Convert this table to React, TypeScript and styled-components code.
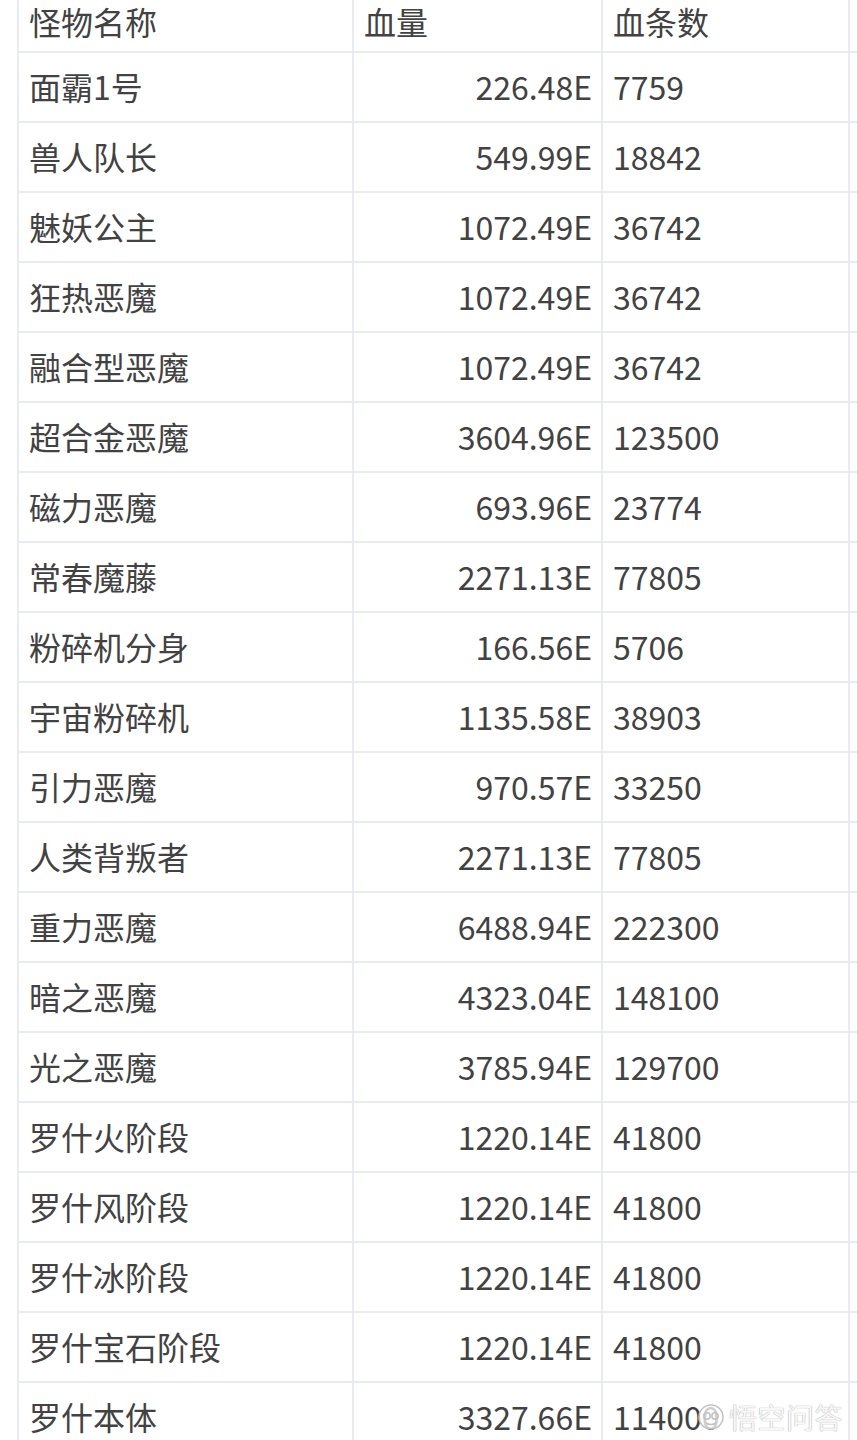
import React from 'react';
import styled, { createGlobalStyle } from 'styled-components';

const GlobalStyle = createGlobalStyle`
  html, body {
    margin: 0;
    padding: 0;
    background: #ffffff;
    overflow: hidden;
  }
  body {
    font-family: "Noto Sans CJK SC", "Noto Sans", sans-serif;
  }
`;

const Page = styled.div`
  position: relative;
  width: 857px;
  height: 1440px;
  overflow: hidden;
  background: #fff;
`;

const Sheet = styled.div`
  padding-left: 17px;
  display: grid;
  grid-template-columns: 337px 249px 247px 1fr;
  grid-template-rows: 53px;
  grid-auto-rows: 70px;
`;

interface CellProps {
  align?: 'left' | 'right'
  first?: boolean
  head?: boolean
}

const Cell = styled.div<CellProps>`
  box-sizing: border-box;
  display: flex;
  align-items: center;
  justify-content: ${({ align }) => (align === 'right' ? 'flex-end' : 'flex-start')};
  padding: ${({ align }) => (align === 'right' ? '0 9px 0 0' : '0 0 0 10px')};
  ${({ head }) => head && `padding-bottom: 8px;`}
  border-right: 2px solid #e8ecf2;
  border-bottom: 2px solid #e8ecf2;
  ${({ first }) => first && `border-left: 2px solid #e8ecf2;`}
  font-size: 32px;
  line-height: 1.1;
  color: #424242;
  white-space: nowrap;
`;

const Filler = styled.div`
  border-bottom: 2px solid #e8ecf2;
`;

const Watermark = styled.div`
  position: absolute;
  right: 14px;
  bottom: 8px;
  display: flex;
  align-items: center;
  gap: 3px;
  pointer-events: none;
`;

const MarkText = styled.span`
  font-size: 28px;
  line-height: 1;
  color: rgba(255, 255, 255, 0.92);
  text-shadow: 0 0 1px #b0b0b0, 0 0 1px #b0b0b0;
  letter-spacing: 0.5px;
`;

type Row = [string, string, string];

const rows: Row[] = [
  ['面霸1号', '226.48E', '7759'],
  ['兽人队长', '549.99E', '18842'],
  ['魅妖公主', '1072.49E', '36742'],
  ['狂热恶魔', '1072.49E', '36742'],
  ['融合型恶魔', '1072.49E', '36742'],
  ['超合金恶魔', '3604.96E', '123500'],
  ['磁力恶魔', '693.96E', '23774'],
  ['常春魔藤', '2271.13E', '77805'],
  ['粉碎机分身', '166.56E', '5706'],
  ['宇宙粉碎机', '1135.58E', '38903'],
  ['引力恶魔', '970.57E', '33250'],
  ['人类背叛者', '2271.13E', '77805'],
  ['重力恶魔', '6488.94E', '222300'],
  ['暗之恶魔', '4323.04E', '148100'],
  ['光之恶魔', '3785.94E', '129700'],
  ['罗什火阶段', '1220.14E', '41800'],
  ['罗什风阶段', '1220.14E', '41800'],
  ['罗什冰阶段', '1220.14E', '41800'],
  ['罗什宝石阶段', '1220.14E', '41800'],
  ['罗什本体', '3327.66E', '114000'],
];

function Logo() {
  return (
    <svg width="30" height="30" viewBox="0 0 30 30">
      <circle cx="15" cy="15" r="12" fill="rgba(255,255,255,0.75)" stroke="#c2c2c2" strokeWidth="1.5" />
      <circle cx="11" cy="14" r="3.2" fill="none" stroke="#c2c2c2" strokeWidth="1.5" />
      <circle cx="19" cy="14" r="3.2" fill="none" stroke="#c2c2c2" strokeWidth="1.5" />
      <path d="M10 21 Q15 24 20 21" fill="none" stroke="#c2c2c2" strokeWidth="1.5" />
    </svg>
  );
}

export default function App() {
  return (
    <Page>
      <GlobalStyle />
      <Sheet>
        <Cell first head>怪物名称</Cell>
        <Cell head>血量</Cell>
        <Cell head>血条数</Cell>
        <Filler />
        {rows.map(function (row, index) {
          return (
            <React.Fragment key={index}>
              <Cell first>{row[0]}</Cell>
              <Cell align="right">{row[1]}</Cell>
              <Cell>{row[2]}</Cell>
              <Filler />
            </React.Fragment>
          );
        })}
      </Sheet>
      <Watermark>
        <Logo />
        <MarkText>悟空问答</MarkText>
      </Watermark>
    </Page>
  );
}
